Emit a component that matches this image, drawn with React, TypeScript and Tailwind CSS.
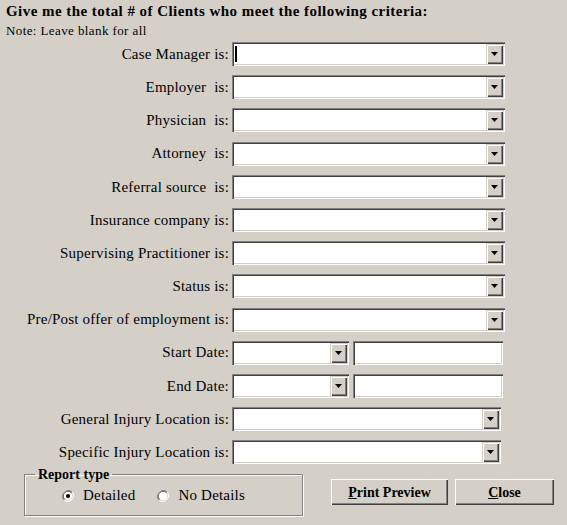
import React from 'react';

const sunken =
  'shadow-[inset_1px_1px_0_#808080,inset_2px_2px_0_#404040,inset_-1px_-1px_0_#ffffff,inset_-2px_-2px_0_#d4d0c8]';
const raised =
  'shadow-[inset_1px_1px_0_#d4d0c8,inset_2px_2px_0_#ffffff,inset_-1px_-1px_0_#404040,inset_-2px_-2px_0_#808080]';

const Arrow = () => (
  <svg width="7" height="4" viewBox="0 0 7 4">
    <path d="M0 0h7L3.5 4z" fill="#000" />
  </svg>
);

const Combo = ({ width, caret }: { width: string; caret?: boolean }) => (
  <div className={`relative h-[24px] bg-white ${width} ${sunken}`}>
    {caret && <div className="absolute left-[3px] top-[4px] h-[16px] w-[2px] bg-black" />}
    <div className={`absolute right-[2px] top-[2px] flex h-[20px] w-[17px] items-center justify-center bg-[#d4d0c8] ${raised}`}>
      <Arrow />
    </div>
  </div>
);

const rows = [
  { label: 'Case Manager is:', kind: 'combo', caret: true },
  { label: 'Employer  is:', kind: 'combo' },
  { label: 'Physician  is:', kind: 'combo' },
  { label: 'Attorney  is:', kind: 'combo' },
  { label: 'Referral source  is:', kind: 'combo' },
  { label: 'Insurance company is:', kind: 'combo' },
  { label: 'Supervising Practitioner is:', kind: 'combo' },
  { label: 'Status is:', kind: 'combo' },
  { label: 'Pre/Post offer of employment is:', kind: 'combo' },
  { label: 'Start Date:', kind: 'date' },
  { label: 'End Date:', kind: 'date' },
  { label: 'General Injury Location is:', kind: 'short' },
  { label: 'Specific Injury Location is:', kind: 'short' },
];

const Radio = ({ checked, label }: { checked?: boolean; label: string }) => (
  <div className="flex items-center">
    <svg width="12" height="12" viewBox="0 0 12 12" className="mr-[9px]">
      <path d="M10.2 1.8A6 6 0 0 0 1.8 10.2" fill="none" stroke="#808080" strokeWidth="1" />
      <path d="M9.5 2.5A5 5 0 0 0 2.5 9.5" fill="none" stroke="#404040" strokeWidth="1" />
      <path d="M1.8 10.2A6 6 0 0 0 10.2 1.8" fill="none" stroke="#ffffff" strokeWidth="1" />
      <circle cx="6" cy="6" r="4.3" fill="#ffffff" />
      {checked && <circle cx="6" cy="6" r="2" fill="#000" />}
    </svg>
    <span className="text-[15px] tracking-[0.2px]">{label}</span>
  </div>
);

const Button = ({ first, rest, width }: { first: string; rest: string; width: string }) => (
  <div
    className={`flex h-[26px] ${width} items-center justify-center bg-[#d4d0c8] text-[14px] font-bold shadow-[inset_1px_1px_0_#ffffff,inset_-1px_-1px_0_#404040,inset_-2px_-2px_0_#808080]`}
  >
    <span>
      <span className="underline">{first}</span>
      {rest}
    </span>
  </div>
);

export default function App() {
  return (
    <div className="h-[525px] w-[567px] bg-[#d4d0c8] [font-family:Liberation_Serif,serif] text-black">
      <div className="px-[6px] pt-[3px] text-[15px] font-bold leading-[16px] tracking-[0.45px]">
        Give me the total # of Clients who meet the following criteria:
      </div>
      <div className="mt-[5px] px-[6px] text-[13px] leading-[14px] tracking-[0.4px]">Note: Leave blank for all</div>

      <div className="mt-[4px] flex flex-col gap-[9.2px]">
        {rows.map((r) => (
          <div key={r.label} className="flex h-[24px] items-center">
            <div className="w-[232px] whitespace-pre pr-[3px] text-right text-[15px] tracking-[0.2px]">{r.label}</div>
            {r.kind === 'combo' && <Combo width="w-[273px]" caret={r.caret} />}
            {r.kind === 'short' && <Combo width="w-[269px]" />}
            {r.kind === 'date' && (
              <div className="flex gap-[4px]">
                <Combo width="w-[117px]" />
                <div className={`h-[24px] w-[150px] bg-white ${sunken}`} />
              </div>
            )}
          </div>
        ))}
      </div>

      <div className="mt-[3px] flex items-start">
        <fieldset className="ml-[24px] h-[49px] w-[279px] border border-[#808080] pl-[10px] shadow-[inset_1px_1px_0_#ffffff,1px_1px_0_#ffffff]">
          <legend className="px-[3px] text-[14px] font-bold leading-[15px]">Report type</legend>
          <div className="mt-[2px] flex gap-[22px] pl-[27px]">
            <Radio checked label="Detailed" />
            <Radio label="No Details" />
          </div>
        </fieldset>
        <div className="ml-[28px] mt-[12px] flex gap-[7px]">
          <Button first="P" rest="rint Preview" width="w-[117px]" />
          <Button first="C" rest="lose" width="w-[99px]" />
        </div>
      </div>
    </div>
  );
}
